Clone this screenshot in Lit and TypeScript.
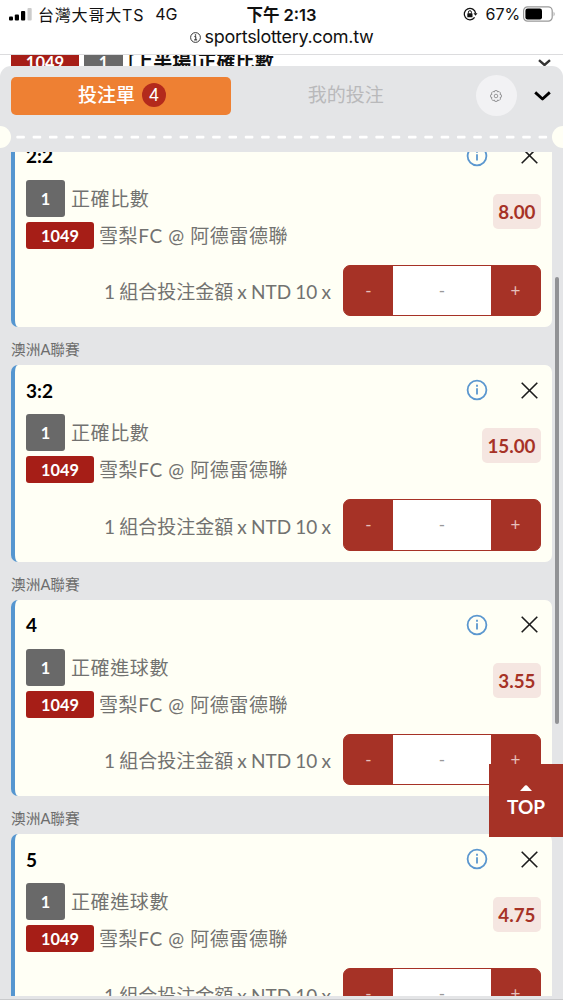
import { LitElement, html, css, svg } from "lit";
import { customElement, property } from "lit/decorators.js";

interface Bet {
  league: string;
  pick: string;
  market: string;
  odds: string;
}

const LEAGUE = "澳洲A聯賽";
const BETS: Bet[] = [
  { league: "", pick: "2:2", market: "正確比數", odds: "8.00" },
  { league: LEAGUE, pick: "3:2", market: "正確比數", odds: "15.00" },
  { league: LEAGUE, pick: "4", market: "正確進球數", odds: "3.55" },
  { league: LEAGUE, pick: "5", market: "正確進球數", odds: "4.75" },
];

@customElement("status-bar")
export class StatusBar extends LitElement {
  static styles = css`
    :host {
      display: block;
      height: 54px;
      border-bottom: 1px solid #dcdcde;
      background: #fff;
      color: #111;
      font-family: Inter, "Noto Sans CJK TC", sans-serif;
    }
    .row {
      display: grid;
      grid-template-columns: 1fr auto 1fr;
      height: 28px;
      align-items: center;
      padding: 0 8px 0 9px;
      font-size: 16px;
      white-space: nowrap;
    }
    .left,
    .right {
      display: flex;
      align-items: center;
    }
    .right {
      justify-content: flex-end;
    }
    .carrier {
      margin-left: 6px;
      letter-spacing: 0.8px;
    }
    .net {
      margin-left: 11px;
    }
    .time {
      margin-right: 1px;
      font-weight: 600;
      font-size: 16.5px;
    }
    .pct {
      margin: 0 3px 0 8px;
      letter-spacing: -0.1px;
    }
    .url {
      display: flex;
      justify-content: center;
      align-items: center;
      gap: 4px;
      height: 18px;
      font-size: 18px;
      letter-spacing: -0.3px;
      line-height: 18px;
    }
    svg {
      display: block;
    }
  `;

  render() {
    return html`
      <div class="row">
        <div class="left">
          <svg width="23" height="14" viewBox="0 0 23 14">
            <rect x="0" y="9.4" width="4" height="4.2" rx="1" fill="#000" />
            <rect x="5.8" y="7.4" width="4.2" height="6.2" rx="1" fill="#000" />
            <rect x="12" y="4" width="4.2" height="9.6" rx="1" fill="#000" />
            <rect x="18.5" y="1" width="4.2" height="12.6" rx="1" fill="#ccc" />
          </svg>
          <span class="carrier">台灣大哥大TS</span>
          <span class="net">4G</span>
        </div>
        <div class="time">下午 2:13</div>
        <div class="right">
          <svg width="15" height="14" viewBox="0 0 15 14" fill="none" stroke="#111" stroke-width="1.3">
            <path d="M11.6 10.4A5.7 5.7 0 1 1 12.6 6.4" />
            <path d="M10.5 6.2h4l-2 2.6z" fill="#111" stroke="none" />
            <rect x="4.3" y="6.3" width="5.2" height="4" rx=".6" fill="#111" stroke="none" />
            <path d="M5.4 6.5V5.2a1.5 1.5 0 0 1 3 0v1.3" stroke-width="1" />
          </svg>
          <span class="pct">67%</span>
          <svg width="32" height="16" viewBox="0 0 32 16">
            <rect x=".6" y=".8" width="28.6" height="14.4" rx="4" fill="#fff" stroke="#999" stroke-width="1.2" />
            <rect x="2.4" y="2.6" width="16.6" height="10.8" rx="2.2" fill="#000" />
            <path d="M30.6 5.6q2 2.4 0 4.8z" fill="#999" />
          </svg>
        </div>
      </div>
      <div class="url">
        <svg width="11" height="11" viewBox="0 0 11 11" fill="none" stroke="#222">
          <circle cx="5.5" cy="5.5" r="4.9" stroke-width=".9" />
          <path d="M4.4 4.6h1.4v3.2M4.1 7.9h3" stroke-width="1" />
          <circle cx="5.5" cy="2.9" r=".75" fill="#222" stroke="none" />
        </svg>
        <span>sportslottery.com.tw</span>
      </div>
    `;
  }
}

@customElement("bet-card")
export class BetCard extends LitElement {
  @property({ attribute: false }) bet!: Bet;

  static styles = css`
    :host {
      display: block;
      color: #727270;
      font-size: 19px;
    }
    .card {
      box-sizing: border-box;
      height: 196.5px;
      border-left: 4px solid #5596d0;
      border-radius: 7px;
      background: #fffff5;
      padding: 13px 11px 0;
    }
    .head {
      display: flex;
      align-items: center;
      height: 24px;
      color: #000;
      font-weight: 700;
    }
    .head span {
      flex: 1;
    }
    .head svg {
      display: block;
    }
    .close {
      margin: 0 3px 0 33px;
    }
    .body {
      display: flex;
      justify-content: space-between;
      align-items: flex-start;
      margin-top: 12px;
    }
    .line {
      display: flex;
      align-items: center;
      gap: 5px;
      letter-spacing: 0.6px;
      white-space: nowrap;
    }
    .line + .line {
      margin-top: 5px;
    }
    .tag {
      display: flex;
      align-items: center;
      justify-content: center;
      border-radius: 3px;
      color: #fff;
      font-weight: 700;
      font-size: 16.3px;
      letter-spacing: 0;
    }
    .grey {
      width: 39px;
      height: 37px;
      margin-right: 1px;
      background: #696969;
    }
    .red {
      width: 68px;
      height: 27px;
      background: #a61e17;
    }
    .text {
      line-height: 27px;
    }
    .odds {
      margin-top: 14px;
      padding: 0 5.5px;
      line-height: 35px;
      border-radius: 5px;
      background: #f5e6e1;
      color: #a63226;
      font-weight: 700;
      font-size: 18.8px;
    }
    .stake {
      display: flex;
      align-items: center;
      justify-content: flex-end;
      gap: 12px;
      margin-top: 16px;
      white-space: nowrap;
      word-spacing: -0.7px;
    }
    .stepper {
      box-sizing: border-box;
      display: grid;
      grid-template-columns: 49px 1fr 49px;
      width: 198px;
      height: 51.5px;
      border: 1px solid #a63226;
      border-radius: 7px;
      overflow: hidden;
      background: #a63226;
      text-align: center;
      line-height: 50px;
      font-size: 17px;
      color: #e6c0bb;
    }
    .amount {
      background: #fff;
      color: #999;
    }
  `;

  render() {
    const b = this.bet;
    return html`
      <div class="card">
        <div class="head">
          <span>${b.pick}</span>
          <svg width="22" height="22" viewBox="0 0 22 22" fill="none" stroke="#5b97cf">
            <circle cx="11" cy="11" r="9.4" stroke-width="1.8" />
            <path d="M11 9.2v6.3" stroke-width="1.8" />
            <path d="M11 5.8v1.9" stroke-width="1.8" />
          </svg>
          <svg class="close" width="17" height="17" viewBox="0 0 17 17" stroke="#1c1c1c" stroke-width="1.6">
            <path d="M.7 .7L16.3 16.3M16.3 .7L.7 16.3" />
          </svg>
        </div>
        <div class="body">
          <div>
            <div class="line"><span class="tag grey">1</span><span class="text">${b.market}</span></div>
            <div class="line"><span class="tag red">1049</span><span class="text">雪梨FC @ 阿德雷德聯</span></div>
          </div>
          <div class="odds">${b.odds}</div>
        </div>
        <div class="stake">
          <span>1 組合投注金額 x NTD 10 x</span>
          <div class="stepper"><span>-</span><span class="amount">-</span><span>+</span></div>
        </div>
      </div>
    `;
  }
}

const gearTeeth = Array.from({ length: 8 }, (_, i) => {
  const at = (deg: number, r: number) => {
    const a = (deg * Math.PI) / 180;
    return `${(6 + r * Math.cos(a)).toFixed(2)} ${(6 + r * Math.sin(a)).toFixed(2)}`;
  };
  const d = i * 45;
  return `${i ? "L" : "M"}${at(d - 12, 5.5)}L${at(d + 12, 5.5)}L${at(d + 22, 4.3)}`;
}).join("") + "Z";

@customElement("app-root")
export class AppRoot extends LitElement {
  static styles = css`
    :host {
      display: flex;
      flex-direction: column;
      position: relative;
      width: 563px;
      height: 1000px;
      overflow: hidden;
      background: #fff;
      font-family: Lato, "Noto Sans CJK TC", sans-serif;
    }
    status-bar {
      flex: none;
    }
    .peek {
      display: flex;
      flex: none;
      align-items: flex-start;
      height: 11px;
      overflow: hidden;
      padding: 0 12px 0 11px;
      font-size: 19px;
      font-weight: 700;
      line-height: 16px;
      color: #111;
      white-space: nowrap;
    }
    .peek .tag {
      flex: none;
      height: 20px;
      text-align: center;
      color: #fff;
      font-size: 16.5px;
    }
    .tag.code {
      width: 68px;
      margin-right: 5px;
      background: #a61e17;
    }
    .tag.num {
      width: 39px;
      margin-right: 5px;
      background: #696969;
    }
    .peek .name {
      flex: 1;
      margin-top: -1px;
      letter-spacing: 0.1px;
    }
    .peek svg {
      margin-top: 4px;
    }
    .sheet {
      display: flex;
      flex: 1;
      flex-direction: column;
      min-height: 0;
      background: #e4e5e7;
      border-radius: 11px 11px 0 0;
    }
    .tabs {
      display: flex;
      flex: none;
      align-items: center;
      height: 41px;
      padding: 9px 12.5px 0 11px;
      font-size: 19px;
    }
    .tab {
      display: flex;
      align-items: center;
      justify-content: center;
      gap: 7px;
      height: 38px;
      line-height: 24px;
      padding-bottom: 1px;
      box-sizing: border-box;
    }
    .active {
      width: 220px;
      padding-left: 2px;
      border-radius: 5px;
      background: #ee8033;
      color: #fff;
      font-weight: 500;
    }
    .count {
      width: 24px;
      height: 24px;
      border-radius: 50%;
      background: #b32a1c;
      text-align: center;
      line-height: 24px;
      font-size: 16.5px;
    }
    .mine {
      flex: 1;
      padding-right: 15px;
      color: #b9b9bb;
    }
    .gear {
      display: flex;
      align-items: center;
      justify-content: center;
      width: 41px;
      height: 41px;
      margin-right: 17px;
      border-radius: 50%;
      background: #f2f2f4;
    }
    .tear {
      display: flex;
      flex: none;
      align-items: center;
      justify-content: space-between;
      height: 22px;
      margin: 10px 0 4px;
    }
    .tear svg {
      display: block;
    }
    .list {
      flex: 1;
      min-height: 0;
      overflow: hidden;
      padding: 0 11px;
    }
    .scrolled {
      margin-top: -21.1px;
    }
    .league {
      height: 38px;
      line-height: 44px;
      font-size: 14.7px;
      color: #6d6d6d;
    }
    .foot {
      flex: none;
      height: 3px;
      border-bottom: 1px solid #c9cacc;
    }
    .bar {
      position: absolute;
      left: 555px;
      top: 277px;
      width: 4px;
      height: 447px;
      border-radius: 2px;
      background: #919295;
    }
    .top {
      position: absolute;
      right: 0;
      top: 764px;
      display: flex;
      flex-direction: column;
      align-items: center;
      box-sizing: border-box;
      width: 74px;
      height: 73px;
      padding-top: 21px;
      background: #a63226;
      color: #fff;
      font-size: 19px;
      font-weight: 700;
      line-height: 24px;
    }
    .top svg {
      display: block;
      margin-bottom: 4px;
    }
  `;

  render() {
    return html`
      <status-bar></status-bar>
      <div class="peek">
        <span class="tag code">1049</span><span class="tag num">1</span>
        <span class="name">[上半場]正確比數</span>
        <svg width="13" height="8" viewBox="0 0 13 8" fill="none" stroke="#333" stroke-width="2.4">
          <path d="M1 1.2L6.5 6L12 1.2" />
        </svg>
      </div>
      <div class="sheet">
        <div class="tabs">
          <div class="tab active"><span>投注單</span><span class="count">4</span></div>
          <div class="tab mine">我的投注</div>
          <div class="gear">
            <svg width="12" height="12" viewBox="0 0 12 12" fill="none" stroke="#8d8d8f" stroke-width=".9">
              <path d=${gearTeeth} />
              <circle cx="6" cy="6" r="1.8" />
            </svg>
          </div>
          <svg width="17" height="11" viewBox="0 0 17 11" fill="none" stroke="#000" stroke-width="2.8">
            <path d="M1.2 2.4L8.5 9L15.8 2.4" stroke-linejoin="round" />
          </svg>
        </div>
        <div class="tear">
          <svg width="563" height="22" viewBox="0 0 563 22">
            <circle cx="0" cy="11" r="11" fill="#fffff5" />
            <circle cx="563" cy="11" r="11" fill="#fffff5" />
            ${Array.from(
              { length: 33 },
              (_, i) => svg`<rect x=${16.3 + i * 16.32} y="9.7" width="8.6" height="2.8" rx="1" fill="#fff" />`
            )}
          </svg>
        </div>
        <div class="list">
          <div class="scrolled">
            ${BETS.map(
              (b) => html`
                ${b.league ? html`<div class="league">${b.league}</div>` : ""}
                <bet-card .bet=${b}></bet-card>
              `
            )}
          </div>
        </div>
        <div class="foot"></div>
      </div>
      <div class="bar"></div>
      <div class="top">
        <svg width="12" height="6" viewBox="0 0 12 6"><path d="M0 6L5 .6Q6 -.3 7 .6L12 6z" fill="#fff" /></svg>
        <span>TOP</span>
      </div>
    `;
  }
}
